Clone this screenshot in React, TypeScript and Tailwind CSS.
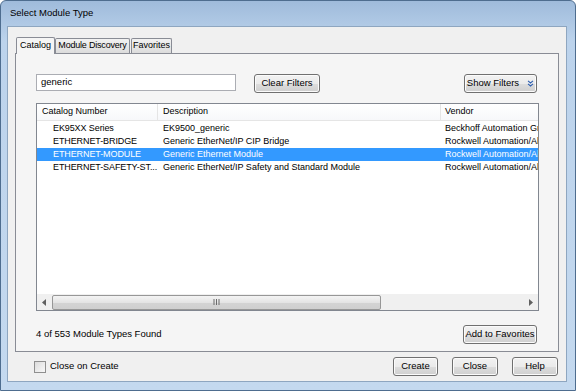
import React from "react"

const rows = [
  { cat: "EK95XX Series", desc: "EK9500_generic", vendor: "Beckhoff Automation GmbH" },
  { cat: "ETHERNET-BRIDGE", desc: "Generic EtherNet/IP CIP Bridge", vendor: "Rockwell Automation/Allen-Bradley" },
  { cat: "ETHERNET-MODULE", desc: "Generic Ethernet Module", vendor: "Rockwell Automation/Allen-Bradley", selected: true },
  { cat: "ETHERNET-SAFETY-ST...", desc: "Generic EtherNet/IP Safety and Standard Module", vendor: "Rockwell Automation/Allen-Bradley" },
]

function Btn({ children, className = "" }: { children: React.ReactNode; className?: string }) {
  return (
    <div
      className={
        "flex items-center justify-center whitespace-nowrap rounded-[3px] border border-[#707070] bg-[linear-gradient(#f2f2f2_0%,#ebebeb_50%,#dddddd_51%,#cfcfcf_100%)] text-[9.5px] text-black shadow-[inset_0_0_0_1px_#fbfbfb] " +
        className
      }
    >
      {children}
    </div>
  )
}

export default function App() {
  return (
    <div
      className="h-[391px] w-[576px] overflow-hidden bg-white"
      style={{ fontFamily: '"Liberation Sans", Arial, sans-serif' }}
    >
      <div className="flex h-[391px] w-[576px] flex-col rounded-t-[6px] border border-[#4e6d8f] bg-[linear-gradient(#9fbbdb,#bcd3ec_40px,#c4d9ef)]">
        {/* title bar */}
        <div className="flex h-[25px] shrink-0 items-center pl-[9px] text-[9.5px] text-black">Select Module Type</div>

        <div className="mx-[6px] flex h-[356px] w-[560px] flex-col border border-[#8ea6c0] bg-[#f0f0f0]">
          {/* tabs */}
          <div className="ml-[8px] mt-[10px] flex items-end whitespace-nowrap text-[9px]">
            <div className="relative z-10 -mb-px flex h-[17px] w-[39px] items-center justify-center rounded-t-[2px] border border-b-0 border-[#898c95] bg-[#f5f5f5]">
              Catalog
            </div>
            <div className="flex h-[15px] w-[75px] items-center justify-center rounded-t-[2px] border border-b-0 border-[#898c95] bg-[linear-gradient(#f2f2f2,#dcdcdc)] tracking-[-0.2px]">
              Module Discovery
            </div>
            <div className="ml-px flex h-[15px] w-[41px] items-center justify-center rounded-t-[2px] border border-b-0 border-[#898c95] bg-[linear-gradient(#f2f2f2,#dcdcdc)]">
              Favorites
            </div>
          </div>

          {/* tab panel */}
          <div className="ml-[7px] flex h-[299px] w-[544px] flex-col border border-[#898c95] bg-[#f5f5f5] px-[20px] pt-[18px]">
            <div className="flex items-center">
              <div className="flex h-[17px] w-[200px] items-center border border-[#abadb3] bg-white pl-[4px] text-[9.5px]">
                generic
              </div>
              <Btn className="ml-[18px] mt-[2px] h-[19px] w-[66px]">Clear Filters</Btn>
              <div className="flex-1" />
              <Btn className="mr-[1px] mt-[2px] h-[19px] w-[73px] gap-[8px]">
                <span>Show Filters</span>
                <svg width="7" height="7" viewBox="0 0 7 7" fill="none" stroke="#2e5fb0" strokeWidth="1.1">
                  <path d="M1 0.8 L3.5 3 L6 0.8" />
                  <path d="M1 3.8 L3.5 6 L6 3.8" />
                </svg>
              </Btn>
            </div>

            {/* list */}
            <div className="mt-[10px] flex h-[208px] w-[503px] flex-col border border-[#828790] bg-white text-[9px]">
              <div className="flex h-[17px] shrink-0 border-b border-[#e5e5e5] bg-[linear-gradient(#ffffff,#f7f8fa)]">
                <div className="flex w-[121px] items-center border-r border-[#e5e5e5] pl-[5px]">Catalog Number</div>
                <div className="flex w-[283px] items-center border-r border-[#e5e5e5] pl-[5px]">Description</div>
                <div className="flex flex-1 items-center pl-[4px]">Vendor</div>
              </div>
              <div className="flex flex-1 flex-col pt-[1px]">
                {rows.map((r) => (
                  <div
                    key={r.cat}
                    className={
                      "flex h-[13px] items-center whitespace-nowrap " +
                      (r.selected ? "bg-[#3399ff] text-white" : "text-black")
                    }
                  >
                    <div className="w-[121px] overflow-hidden pl-[16px] tracking-[-0.1px]">{r.cat}</div>
                    <div className="w-[283px] overflow-hidden pl-[5px]">{r.desc}</div>
                    <div className="w-[97px] overflow-hidden pl-[4px]">{r.vendor}</div>
                  </div>
                ))}
              </div>
              {/* horizontal scrollbar */}
              <div className="flex h-[16px] shrink-0 items-center bg-[#f0f0f0]">
                <div className="flex w-[14px] items-center justify-center">
                  <svg width="4" height="7" viewBox="0 0 4 7">
                    <path d="M4 0 L0 3.5 L4 7 Z" fill="#606060" />
                  </svg>
                </div>
                <div className="ml-[1px] flex h-[15px] w-[329px] items-center justify-center rounded-[2px] border border-[#979797] bg-[linear-gradient(#f4f4f4,#e4e4e4_50%,#d4d4d4_51%,#cfcfcf)]">
                  <svg width="8" height="6" viewBox="0 0 8 6">
                    <path d="M1 0v6M3.5 0v6M6 0v6" stroke="#6a6a6a" strokeWidth="1" />
                  </svg>
                </div>
                <div className="flex-1" />
                <div className="flex w-[14px] items-center justify-center">
                  <svg width="4" height="7" viewBox="0 0 4 7">
                    <path d="M0 0 L4 3.5 L0 7 Z" fill="#606060" />
                  </svg>
                </div>
              </div>
            </div>

            <div className="mt-[14px] flex items-center">
              <span className="text-[9.5px]">4 of 553 Module Types Found</span>
              <div className="flex-1" />
              <Btn className="mr-[1px] h-[19px] w-[74px]">Add to Favorites</Btn>
            </div>
          </div>

          {/* bottom */}
          <div className="flex items-center pl-[26px] pt-[5px]">
            <div className="h-[12px] w-[12px] border border-[#8f8f8f] bg-[linear-gradient(135deg,#dcdcdc,#f8f8f8)]" />
            <span className="ml-[4px] text-[9.5px]">Close on Create</span>
            <div className="flex-1" />
            <Btn className="h-[19px] w-[45px]">Create</Btn>
            <Btn className="ml-[14px] h-[19px] w-[46px]">Close</Btn>
            <Btn className="ml-[14px] mr-[8px] h-[19px] w-[46px]">Help</Btn>
          </div>
        </div>
      </div>
    </div>
  )
}
